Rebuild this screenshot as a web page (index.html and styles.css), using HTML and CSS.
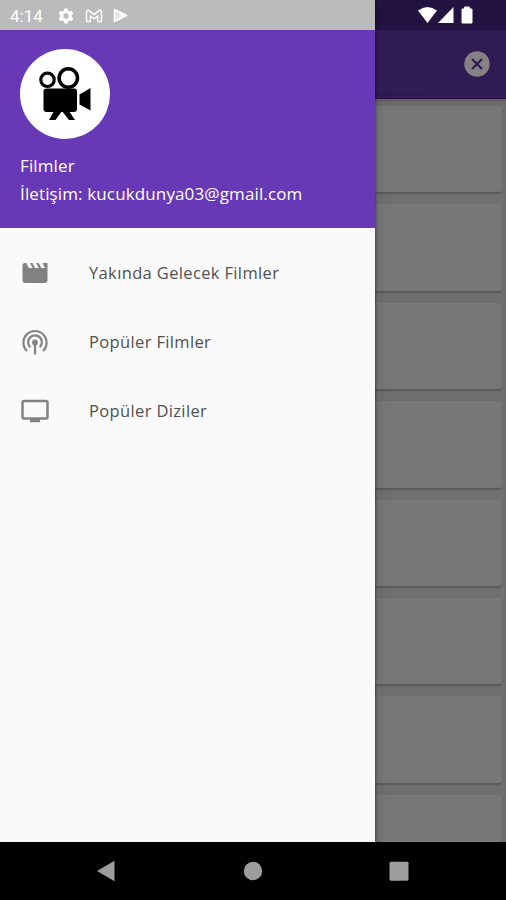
FILE: index.html
```html
<!DOCTYPE html>
<html lang="tr">
<head>
<meta charset="utf-8">
<title>Filmler</title>
<link rel="stylesheet" href="styles.css">
</head>
<body>
<div class="screen">
  <aside class="drawer">
    <div class="status">
      <span class="clock">4:14</span>
      <svg class="gear" viewBox="0 0 24 24"><path fill="#fff" fill-rule="evenodd" d="M19.4 13c.1-.6.1-1.300 0-2l2.100-1.600c.2-.2.2-.4.1-.6l-2-3.500c-.1-.2-.4-.3-.6-.2l-2.500 1a7 7 0 0 0-1.700-1L14.400 2.400c0-.2-.2-.4-.5-.4h-4c-.2 0-.4.2-.5.4L9.100 5.100a7 7 0 0 0-1.700 1l-2.500-1c-.2-.1-.5 0-.6.2l-2 3.500c-.1.2-.1.4.1.6L4.500 11a8 8 0 0 0 0 2l-2.100 1.600c-.2.2-.2.400-.1.600l2 3.500c.1.2.4.3.6.2l2.500-1a7 7 0 0 0 1.700 1l.4 2.700c0 .2.2.4.5.4h4c.2 0 .4-.2.5-.4l.4-2.700a7 7 0 0 0 1.700-1l2.500 1c.2.1.5 0 .6-.2l2-3.500c.1-.2.1-.4-.1-.6zM12 15.600a3.600 3.600 0 1 1 0-7.200 3.600 3.600 0 0 1 0 7.200z"/></svg>
      <svg class="mail" viewBox="0 0 18 15"><path fill="none" stroke="#fff" stroke-width="1.500" stroke-linejoin="round" d="M1 13.500V2.500Q1.500.8 3.300 1.500L9 6l5.700-4.500Q16.500.8 17 2.500v11h-4V7.500l-4 3-4-3v6z"/></svg>
      <svg class="play" viewBox="0 0 16 16"><path fill="#fff" fill-opacity=".65" stroke="#fff" stroke-width="1.500" stroke-linejoin="round" d="M1.500 1.500 14.500 8l-13 6.500z"/><path fill="#fff" d="M3 2l11 6-11 6 6-6z"/></svg>
    </div>
    <header class="profile">
      <svg class="avatar" viewBox="0 0 90 90"><circle cx="45" cy="45" r="45" fill="#fff"/><g fill="none" stroke="#000"><circle cx="27.500" cy="30.800" r="6.700" stroke-width="3.200"/><circle cx="48.300" cy="29" r="9.200" stroke-width="3.500"/></g><rect x="23.500" y="39.500" width="33.500" height="23.500" rx="3"/><path d="M59.500 45.500 70.500 39v22.500L59.500 55.500zM34 62h8l-6.500 9h-6.500zM42 62h7l6 9H49z"/></svg>
      <div class="name">Filmler</div>
      <div class="contact">İletişim: kucukdunya03@gmail.com</div>
    </header>
    <nav class="menu">
      <div class="item">
        <svg viewBox="0 0 24 24"><path fill="#828282" d="M18 4l2 4h-3l-2-4h-2l2 4h-3l-2-4H8l2 4H7L5 4H4c-1.100 0-2 .9-2 2v12c0 1.100.9 2 2 2h16c1.100 0 2-.9 2-2V4z"/></svg>
        <span>Yakında Gelecek Filmler</span>
      </div>
      <div class="item">
        <svg viewBox="0 0 30 30"><g fill="none" stroke="#828282" stroke-width="2.200"><path d="M7 24a11.600 11.600 0 1 1 16 0M10.200 20.200a6.900 6.900 0 1 1 9.600 0M15 16v11.500"/></g><circle cx="15" cy="15.500" r="2.900" fill="#828282"/></svg>
        <span>Popüler Filmler</span>
      </div>
      <div class="item">
        <svg viewBox="0 0 24 24"><path fill="#828282" d="M21 3H3c-1.100 0-2 .9-2 2v12c0 1.100.9 2 2 2h5v2h8v-2h5c1.100 0 2-.9 2-2V5c0-1.100-.9-2-2-2zm0 14H3V5h18z"/></svg>
        <span>Popüler Diziler</span>
      </div>
    </nav>
  </aside>
  <main class="behind">
    <div class="status-dim">
      <svg viewBox="0 0 56 18"><g fill="#fff"><path d="M0 4.500Q9.500-2.700 19 4.500L9.500 17z"/><path d="M20 17 35.500 1v16z"/><path d="M44 3h2.500V1h5v2H54v14H44z" stroke="#fff" stroke-linejoin="round"/></g></svg>
    </div>
    <div class="toolbar">
      <div class="field"></div>
      <svg class="clear" viewBox="0 0 26 26"><circle cx="13" cy="13" r="12.700" fill="#858185"/><path d="M8 8l10 10M18 8 8 18" stroke="#311b55" stroke-width="2.300"/></svg>
    </div>
    <div class="cards">
      <div class="card"></div><div class="card"></div><div class="card"></div><div class="card"></div><div class="card"></div><div class="card"></div><div class="card"></div><div class="card"></div>
    </div>
  </main>
</div>
<footer class="navbar">
  <svg viewBox="0 0 20 22"><path fill="#9d9d9d" d="M1 11 18.500.7v20.600z"/></svg>
  <svg viewBox="0 0 20 22"><circle cx="10" cy="11" r="9.200" fill="#9d9d9d"/></svg>
  <svg viewBox="0 0 20 22"><rect x=".5" y="1.700" width="19" height="19" rx="1.500" fill="#9d9d9d"/></svg>
</footer>
</body>
</html>
```
FILE: styles.css
```css
* { box-sizing: border-box; }
body {
  margin: 0;
  height: 900px;
  display: grid;
  grid-template-rows: 842px 58px;
  overflow: hidden;
  background: #000;
  font-family: "Open Sans", "Noto Sans", sans-serif;
}
svg { display: block; flex: none; }
.screen { display: grid; grid-template-columns: 375px 1fr; overflow: hidden; }
.drawer {
  z-index: 1;
  background: #fafafa;
  box-shadow: 0 0 3px rgba(0, 0, 0, .65), 0 0 16px rgba(0, 0, 0, .12);
}
.status {
  height: 30px;
  display: flex;
  align-items: center;
  padding: 1px 0 0 10px;
  background: #bbb;
}
.clock { width: 47px; color: #fff; font: 17px/20px Roboto, sans-serif; }
.gear { width: 18px; height: 18px; }
.mail { width: 18px; height: 14px; margin-left: 10px; }
.play { width: 15px; height: 15px; margin-left: 10px; }
.profile {
  height: 198px;
  padding: 19px 20px 0;
  background: #6739b6;
  color: #fff;
  font-size: 17px;
  line-height: 24px;
  letter-spacing: .13px;
  white-space: nowrap;
}
.avatar { width: 90px; height: 90px; }
.name { margin-top: 15px; }
.contact { margin-top: 4px; }
.menu { padding-top: 10px; }
.item {
  height: 69px;
  display: flex;
  align-items: center;
  gap: 39px;
  padding-left: 20px;
  color: #505050;
  font-size: 16.5px;
  letter-spacing: .36px;
  white-space: nowrap;
}
.item svg { width: 30px; height: 30px; }
.behind { min-width: 0; background: #707070; }
.status-dim { height: 30px; padding: 6px 0 0 43px; background: #231340; }
.status-dim svg { width: 56px; height: 18px; }
.toolbar {
  height: 69px;
  display: flex;
  align-items: center;
  justify-content: space-between;
  padding-right: 16px;
  background: #311b55;
  border-bottom: 1px solid #28124b;
}
.field { width: 54px; height: 65px; border-bottom: 1px solid #28164a; align-self: flex-start; }
.clear { width: 26px; height: 26px; }
.cards {
  display: grid;
  grid-auto-rows: 86.4px;
  gap: 12px;
  padding: 7px 4px 0 0;
  box-shadow: inset 0 5px 4px -2px rgba(0, 0, 0, .15);
}
.card {
  background: #777;
  border-radius: 0 3px 3px 0;
  box-shadow: 0 2px 2px rgba(0, 0, 0, .2), 0 0 2px rgba(0, 0, 0, .06);
}
.navbar {
  display: flex;
  justify-content: space-between;
  align-items: center;
  padding: 0 97px 0 96px;
  background: #000;
}
.navbar svg { width: 20px; height: 22px; }
```
